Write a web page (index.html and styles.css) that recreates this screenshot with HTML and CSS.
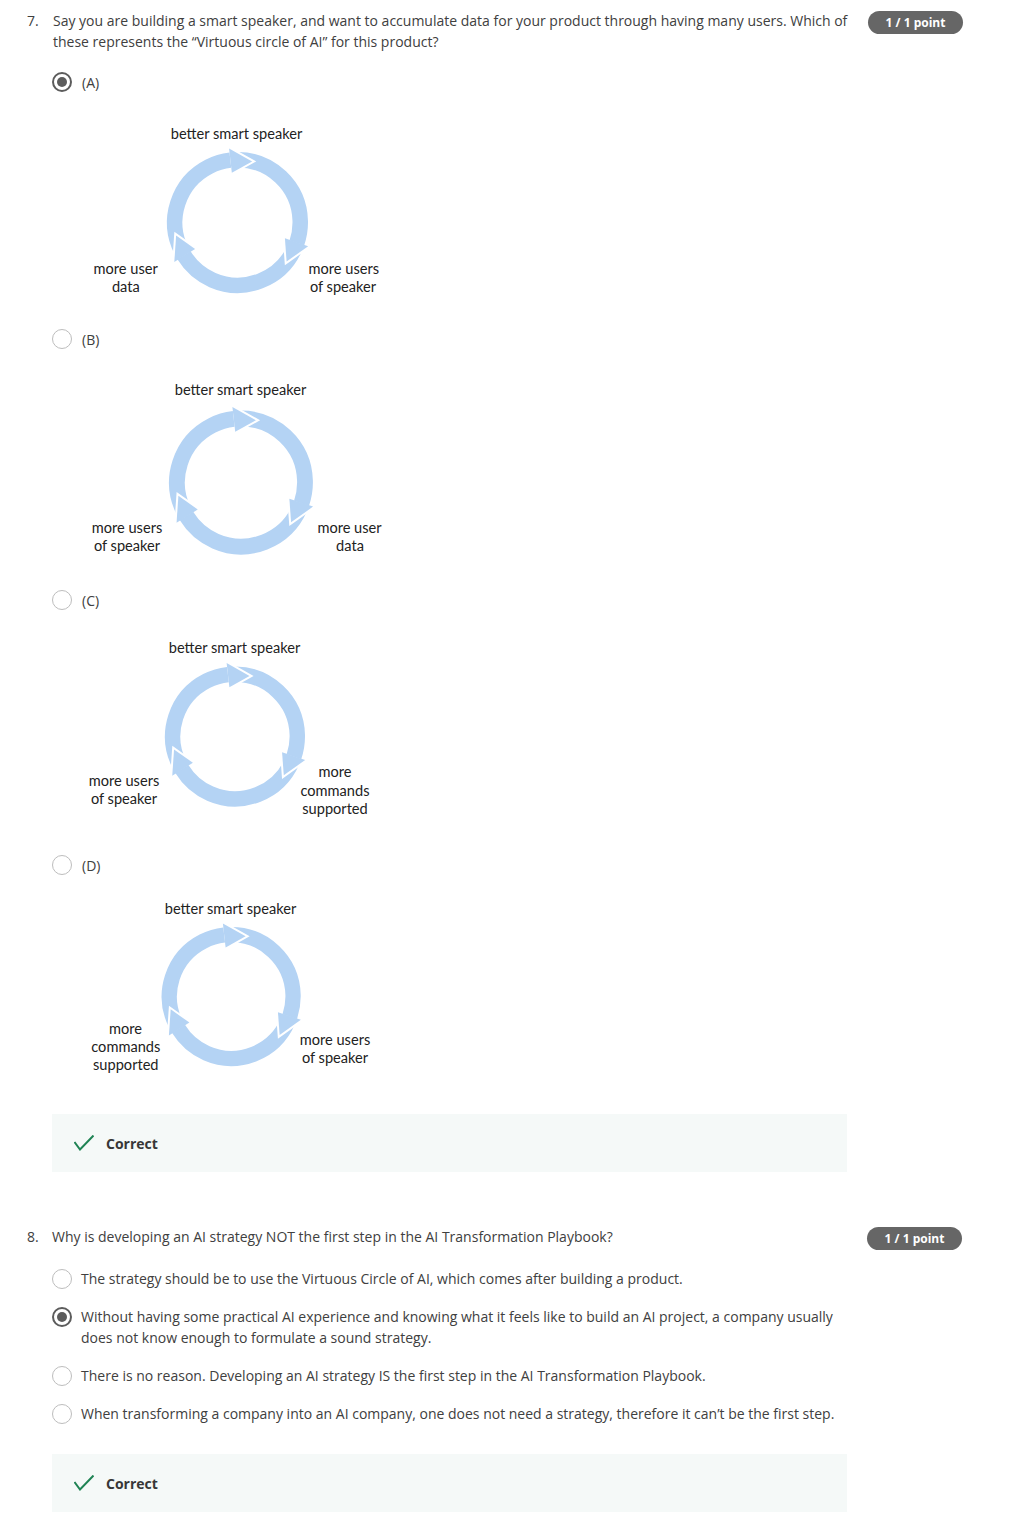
FILE: index.html
```html
<!DOCTYPE html>
<html lang="en">
<head>
<meta charset="utf-8">
<title>Quiz</title>
<link rel="stylesheet" href="styles.css">
</head>
<body>
<div class="quiz">
  <section class="question q7">
    <div class="q-head">
      <span class="q-num">7.</span>
      <div class="q-text">Say you are building a smart speaker, and want to accumulate data for your product through having many users. Which of these represents the “Virtuous circle of AI” for this product?</div>
      <span class="badge">1 / 1 point</span>
    </div>
    <div class="options">
      <div class="opt"><span class="radio checked"></span><span class="opt-label">(A)</span></div>
      <svg class="diagram" width="320" height="237" viewBox="80 92 320 237">
        <defs>
          <g id="head">
            <polyline points="70.01,-25.48 62.75,0 46.98,-17.10" fill="none" stroke="#ffffff" stroke-width="4"/>
            <polygon points="70.01,-25.48 62.75,0 46.98,-17.10" fill="#b4d3f4"/>
          </g>
          <g id="cycle">
            <circle r="62.75" fill="none" stroke="#b4d3f4" stroke-width="15.5" pathLength="360" stroke-dasharray="110.5 360" transform="rotate(153)"/>
            <circle r="62.75" fill="none" stroke="#b4d3f4" stroke-width="15.5" pathLength="360" stroke-dasharray="110.5 360" transform="rotate(-91.5)"/>
            <circle r="62.75" fill="none" stroke="#b4d3f4" stroke-width="15.5" pathLength="360" stroke-dasharray="125 360" transform="rotate(23.5)"/>
            <use href="#head" transform="rotate(-76.5)"/>
            <use href="#head" transform="rotate(38.5)"/>
            <use href="#head" transform="rotate(168)"/>
          </g>
        </defs>
        <use href="#cycle" transform="translate(237.5 222.5)"/>
        <g class="dlabel">
          <text x="236.5" y="139">better smart speaker</text>
          <text x="125.7" y="273.5">more user</text>
          <text x="125.8" y="291.5">data</text>
          <text x="343.8" y="273.5">more users</text>
          <text x="343" y="291.5">of speaker</text>
        </g>
      </svg>

      <div class="opt"><span class="radio"></span><span class="opt-label">(B)</span></div>
      <svg class="diagram" width="320" height="241" viewBox="80 349 320 241">
        <use href="#cycle" transform="translate(241 482.5) scale(1.02)"/>
        <g class="dlabel">
          <text x="240.5" y="395">better smart speaker</text>
          <text x="127" y="532.7">more users</text>
          <text x="127" y="550.7">of speaker</text>
          <text x="349.5" y="532.7">more user</text>
          <text x="350" y="550.7">data</text>
        </g>
      </svg>

      <div class="opt"><span class="radio"></span><span class="opt-label">(C)</span></div>
      <svg class="diagram" width="320" height="245" viewBox="80 610 320 245">
        <use href="#cycle" transform="translate(235 736.5) scale(0.993)"/>
        <g class="dlabel">
          <text x="234.5" y="653">better smart speaker</text>
          <text x="124" y="786">more users</text>
          <text x="124" y="804">of speaker</text>
          <text x="335" y="777">more</text>
          <text x="335" y="795.5">commands</text>
          <text x="335" y="813.5">supported</text>
        </g>
      </svg>

      <div class="opt"><span class="radio"></span><span class="opt-label">(D)</span></div>
      <svg class="diagram" width="320" height="210" viewBox="80 875 320 210">
        <use href="#cycle" transform="translate(231.2 996.5) scale(0.986)"/>
        <g class="dlabel">
          <text x="230.5" y="914.3">better smart speaker</text>
          <text x="125.4" y="1034">more</text>
          <text x="125.8" y="1052.3">commands</text>
          <text x="125.8" y="1070">supported</text>
          <text x="335" y="1045">more users</text>
          <text x="335" y="1063">of speaker</text>
        </g>
      </svg>

      <div class="feedback">
        <svg class="check" width="20" height="16" viewBox="0 0 20 16"><polyline points="0.5,7 6,14.5 19.5,0.5" fill="none" stroke="#1f8354" stroke-width="2"/></svg>
        <span>Correct</span>
      </div>
    </div>
  </section>

  <section class="question q8">
    <div class="q-head">
      <span class="q-num">8.</span>
      <div class="q-text">Why is developing an AI strategy NOT the first step in the AI Transformation Playbook?</div>
      <span class="badge">1 / 1 point</span>
    </div>
    <div class="options">
      <div class="opt"><span class="radio"></span><span class="opt-label">The strategy should be to use the Virtuous Circle of AI, which comes after building a product.</span></div>
      <div class="opt"><span class="radio checked"></span><span class="opt-label">Without having some practical AI experience and knowing what it feels like to build an AI project, a company usually does not know enough to formulate a sound strategy.</span></div>
      <div class="opt"><span class="radio"></span><span class="opt-label">There is no reason. Developing an AI strategy IS the first step in the AI Transformation Playbook.</span></div>
      <div class="opt"><span class="radio"></span><span class="opt-label">When transforming a company into an AI company, one does not need a strategy, therefore it can’t be the first step.</span></div>
      <div class="feedback">
        <svg class="check" width="20" height="16" viewBox="0 0 20 16"><polyline points="0.5,7 6,14.5 19.5,0.5" fill="none" stroke="#1f8354" stroke-width="2"/></svg>
        <span>Correct</span>
      </div>
    </div>
  </section>
</div>
</body>
</html>
```
FILE: styles.css
```css
body {
  margin: 0;
  background: #ffffff;
  font-family: "Open Sans", "Liberation Sans", sans-serif;
  font-size: 14px;
  line-height: 21px;
  color: #404040;
}

.quiz {
  padding: 10px 0 0 27px;
}

.q-head {
  display: grid;
  grid-template-columns: 26px 797px auto;
  align-items: start;
}

.q8 .q-head {
  grid-template-columns: 25px 797px auto;
  margin-top: 54px;
}

.q-num {
  color: #404040;
}

.badge {
  margin-left: 18px;
  margin-top: 1px;
  width: 95px;
  height: 23px;
  border-radius: 12px;
  background: #666666;
  color: #ffffff;
  font-size: 12px;
  font-weight: 700;
  line-height: 23px;
  text-align: center;
}

.options {
  margin-left: 25px;
  margin-top: 20px;
  display: flex;
  flex-direction: column;
}

.opt {
  display: flex;
  align-items: center;
  gap: 10px;
  height: 20px;
}

.radio {
  flex: none;
  width: 20px;
  height: 20px;
  box-sizing: border-box;
  border-radius: 50%;
  border: 1.5px solid #bdbdbd;
  display: flex;
  align-items: center;
  justify-content: center;
}

.radio.checked {
  border: 2px solid #5c5c5c;
}

.radio.checked::after {
  content: "";
  width: 10px;
  height: 10px;
  border-radius: 50%;
  background: #5c5c5c;
}

.opt-label {
  color: #404040;
}

.diagram {
  display: block;
  margin-left: 28px;
}

.dlabel text {
  font-family: Lato, "Open Sans", sans-serif;
  font-size: 14.6px;
  fill: #222222;
  text-anchor: middle;
}

.q8 .options {
  margin-top: 18px;
  gap: 17px;
}

.q8 .opt {
  height: auto;
  align-items: flex-start;
  gap: 9px;
}

.q8 .radio {
  margin-top: 0.5px;
}

.q8 .opt-label {
  width: 766px;
}

.q8 .feedback {
  margin-top: 13px;
}

.feedback {
  margin-top: 29px;
  width: 795px;
  height: 58px;
  box-sizing: border-box;
  background: #f5f9f8;
  display: flex;
  align-items: center;
  gap: 12.5px;
  padding-left: 21.5px;
  font-weight: 700;
  color: #373737;
}

.check {
  display: block;
  flex: none;
}
```
